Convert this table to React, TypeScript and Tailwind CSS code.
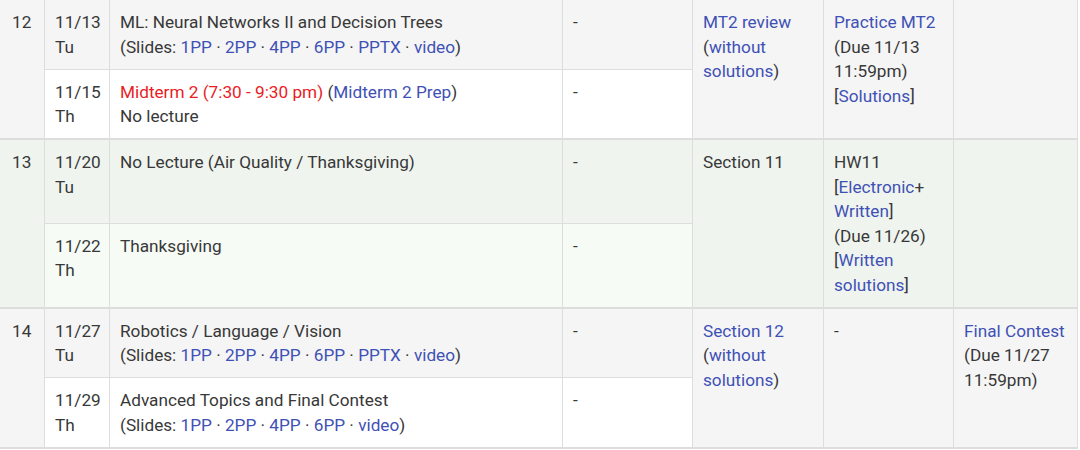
import React from 'react';

const link = 'text-[#3f51b5]';

function Slides({ items }: { items: string[] }) {
  return (
    <>
      (Slides:{' '}
      {items.map((s, i) => (
        <React.Fragment key={s}>
          {i > 0 && ' · '}
          <a className={link}>{s}</a>
        </React.Fragment>
      ))}
      )
    </>
  );
}

const td = 'align-top px-[10px] pt-[10px] pb-[9.5px] border border-[#dddddd]';

export default function App() {
  return (
    <div className="w-[1080px] h-[450px] overflow-hidden bg-white">
      <table
        className="-mt-px -ml-px w-[1078px] table-fixed border-collapse text-[17.2px] leading-[24.5px] text-[#383838]"
        style={{ fontFamily: 'Roboto, "Liberation Sans", sans-serif' }}
      >
        <colgroup>
          <col className="w-[45px]" />
          <col className="w-[65px]" />
          <col className="w-[453px]" />
          <col className="w-[130px]" />
          <col className="w-[131px]" />
          <col className="w-[130px]" />
          <col className="w-[124px]" />
        </colgroup>

        {/* week 12 */}
        <tbody className="border-b-2 border-[#dddddd]">
          <tr className="bg-[#f5f5f5]">
            <td rowSpan={2} className={td + ' pl-[12px] pr-0'}>12</td>
            <td className={td}>11/13<br />Tu</td>
            <td className={td}>
              ML: Neural Networks II and Decision Trees<br />
              <Slides items={['1PP', '2PP', '4PP', '6PP', 'PPTX', 'video']} />
            </td>
            <td className={td}>-</td>
            <td rowSpan={2} className={td}>
              <a className={link}>MT2 review</a>
              <br />(<a className={link}>without solutions</a>)
            </td>
            <td rowSpan={2} className={td}>
              <a className={link}>Practice MT2</a>
              <br />(Due 11/13 11:59pm)
              <br />[<a className={link}>Solutions</a>]
            </td>
            <td rowSpan={2} className={td}></td>
          </tr>
          <tr className="bg-white">
            <td className={td}>11/15<br />Th</td>
            <td className={td}>
              <span className="text-[#ea1c24]">Midterm 2 (7:30 - 9:30 pm)</span> (
              <a className={link}>Midterm 2 Prep</a>)<br />
              No lecture
            </td>
            <td className={td}>-</td>
          </tr>
        </tbody>

        {/* week 13 */}
        <tbody className="border-b-2 border-[#dddddd]">
          <tr className="bg-[#eff4ef]">
            <td rowSpan={2} className={td + ' pl-[12px] pr-0'}>13</td>
            <td className={td}>11/20<br />Tu</td>
            <td className={td}>No Lecture (Air Quality / Thanksgiving)</td>
            <td className={td}>-</td>
            <td rowSpan={2} className={td}>Section 11</td>
            <td rowSpan={2} className={td}>
              HW11
              <br />[<a className={link}>Electronic</a>+ <a className={link}>Written</a>]
              <br />(Due 11/26)
              <br />[<a className={link}>Written solutions</a>]
            </td>
            <td rowSpan={2} className={td}></td>
          </tr>
          <tr className="bg-[#f6fbf6]">
            <td className={td}>11/22<br />Th</td>
            <td className={td}>Thanksgiving</td>
            <td className={td}>-</td>
          </tr>
        </tbody>

        {/* week 14 */}
        <tbody className="border-b-2 border-[#dddddd]">
          <tr className="bg-[#f5f5f5]">
            <td rowSpan={2} className={td + ' pl-[12px] pr-0'}>14</td>
            <td className={td}>11/27<br />Tu</td>
            <td className={td}>
              Robotics / Language / Vision<br />
              <Slides items={['1PP', '2PP', '4PP', '6PP', 'PPTX', 'video']} />
            </td>
            <td className={td}>-</td>
            <td rowSpan={2} className={td}>
              <a className={link}>Section 12</a>
              <br />(<a className={link}>without solutions</a>)
            </td>
            <td rowSpan={2} className={td}>-</td>
            <td rowSpan={2} className={td}>
              <a className={link}>Final Contest</a>
              <br />(Due 11/27 11:59pm)
            </td>
          </tr>
          <tr className="bg-white">
            <td className={td}>11/29<br />Th</td>
            <td className={td}>
              Advanced Topics and Final Contest<br />
              <Slides items={['1PP', '2PP', '4PP', '6PP', 'video']} />
            </td>
            <td className={td}>-</td>
          </tr>
        </tbody>
      </table>
    </div>
  );
}
